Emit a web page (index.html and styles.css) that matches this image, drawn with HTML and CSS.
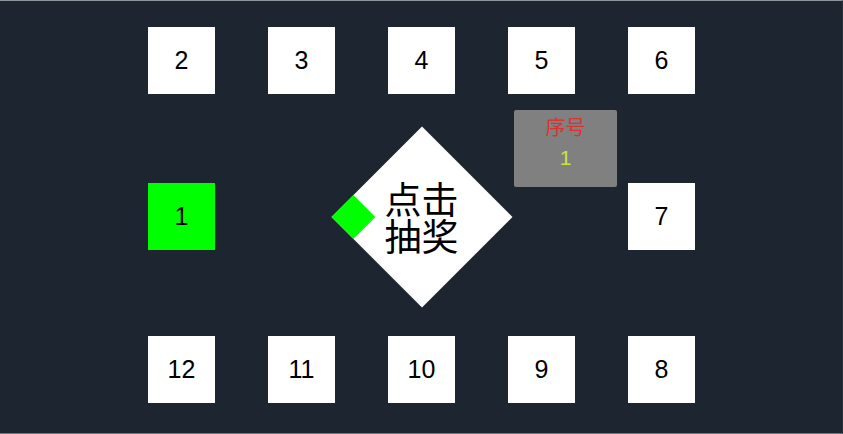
FILE: index.html
```html
<!DOCTYPE html>
<html lang="zh">
<head>
<meta charset="utf-8">
<title>抽奖</title>
<link rel="stylesheet" href="styles.css">
</head>
<body>
<div class="stage">
  <div class="board">
    <div class="cell r1 c1">2</div>
    <div class="cell r1 c2">3</div>
    <div class="cell r1 c3">4</div>
    <div class="cell r1 c4">5</div>
    <div class="cell r1 c5">6</div>
    <div class="cell r2 c1 active">1</div>
    <div class="draw">
      <div class="shape"><span class="marker"></span></div>
      <div class="label">点击<br>抽奖</div>
    </div>
    <div class="cell r2 c5">7</div>
    <div class="cell r3 c1">12</div>
    <div class="cell r3 c2">11</div>
    <div class="cell r3 c3">10</div>
    <div class="cell r3 c4">9</div>
    <div class="cell r3 c5">8</div>
  </div>
  <div class="tip">
    <div class="tip-title">序号</div>
    <div class="tip-value">1</div>
  </div>
</div>
</body>
</html>
```
FILE: styles.css
```css
html, body {
  margin: 0;
  padding: 0;
}
body {
  background: #1d2630;
  font-family: "Liberation Sans", Arial, "Noto Sans CJK SC", sans-serif;
}
.stage {
  position: relative;
  width: 843px;
  height: 434px;
  box-sizing: border-box;
  background: #1d2630;
  border-top: 1px solid #8d9398;
  border-bottom: 1px solid #6f767c;
  border-right: 1px solid #2a333c;
}
.board {
  display: grid;
  grid-template-columns: repeat(5, 67px);
  column-gap: 53px;
  grid-template-rows: 156px 153px 67px;
  padding: 26px 0 0 148px;
}
.cell {
  width: 67px;
  height: 67px;
  background: #ffffff;
  display: flex;
  align-items: center;
  justify-content: center;
  font-size: 25px;
  color: #000;
  align-self: start;
}
.cell.active {
  background: #00ff00;
}
.r1 { grid-row: 1; }
.r2 { grid-row: 2; }
.r3 { grid-row: 3; }
.c1 { grid-column: 1; }
.c2 { grid-column: 2; }
.c3 { grid-column: 3; }
.c4 { grid-column: 4; }
.c5 { grid-column: 5; }
.draw {
  grid-row: 2;
  grid-column: 2 / 5;
  justify-self: center;
  align-self: start;
  margin-top: -57px;
  width: 181px;
  height: 181px;
  display: grid;
  place-items: center;
}
.shape {
  grid-area: 1 / 1;
  position: relative;
  width: 128px;
  height: 128px;
  background: #ffffff;
  transform: rotate(45deg);
}
.marker {
  position: absolute;
  left: 0;
  bottom: 0;
  width: 31px;
  height: 31px;
  background: #00ff00;
}
.label {
  grid-area: 1 / 1;
  position: relative;
  font-family: "Noto Sans CJK SC", sans-serif;
  font-size: 37px;
  line-height: 37px;
  color: #000;
  text-align: center;
}
.tip {
  position: absolute;
  left: 514px;
  top: 109px;
  width: 103px;
  height: 77px;
  background: #808080;
  border-radius: 2px;
  text-align: center;
}
.tip-title {
  margin-top: 5px;
  font-family: "Noto Sans CJK SC", sans-serif;
  font-size: 20px;
  line-height: 24px;
  color: #dc3232;
}
.tip-value {
  margin-top: 7px;
  font-size: 21px;
  line-height: 24px;
  color: #c8e53c;
}
```
